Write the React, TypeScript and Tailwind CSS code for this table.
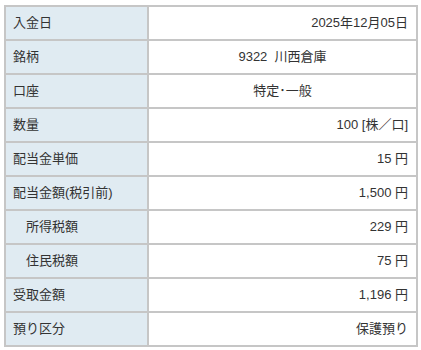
import React from 'react';

type Row = { label: string; value: string; indent?: boolean; center?: boolean };

const rows: Row[] = [
  { label: '入金日', value: '2025年12月05日' },
  { label: '銘柄', value: '9322\u00a0 川西倉庫', center: true },
  { label: '口座', value: '特定･一般', center: true },
  { label: '数量', value: '100 [株／口]' },
  { label: '配当金単価', value: '15 円' },
  { label: '配当金額(税引前)', value: '1,500 円' },
  { label: '所得税額', value: '229 円', indent: true },
  { label: '住民税額', value: '75 円', indent: true },
  { label: '受取金額', value: '1,196 円' },
  { label: '預り区分', value: '保護預り' },
];

const App: React.FC = () => {
  return (
    <div className="min-h-screen bg-white pt-[5px] pl-[4px] font-['Liberation_Sans','Noto_Sans_CJK_JP',sans-serif] text-[13px] text-[#333]">
      <table className="w-[414px] border-separate border-spacing-0 border border-[#c6c6c6]">
        <tbody>
          {rows.map((row) => (
            <tr key={row.label} className="h-[34px]">
              <td
                className={`w-[143px] border border-[#c6c6c6] bg-[#e0ebf2] pr-2 ${
                  row.indent ? 'pl-[20px]' : 'pl-[7px]'
                }`}
              >
                {row.label}
              </td>
              <td
                className={`border border-[#c6c6c6] bg-white pr-[8px] pl-2 ${
                  row.center ? 'text-center' : 'text-right'
                }`}
              >
                {row.value}
              </td>
            </tr>
          ))}
        </tbody>
      </table>
    </div>
  );
};

export default App;
